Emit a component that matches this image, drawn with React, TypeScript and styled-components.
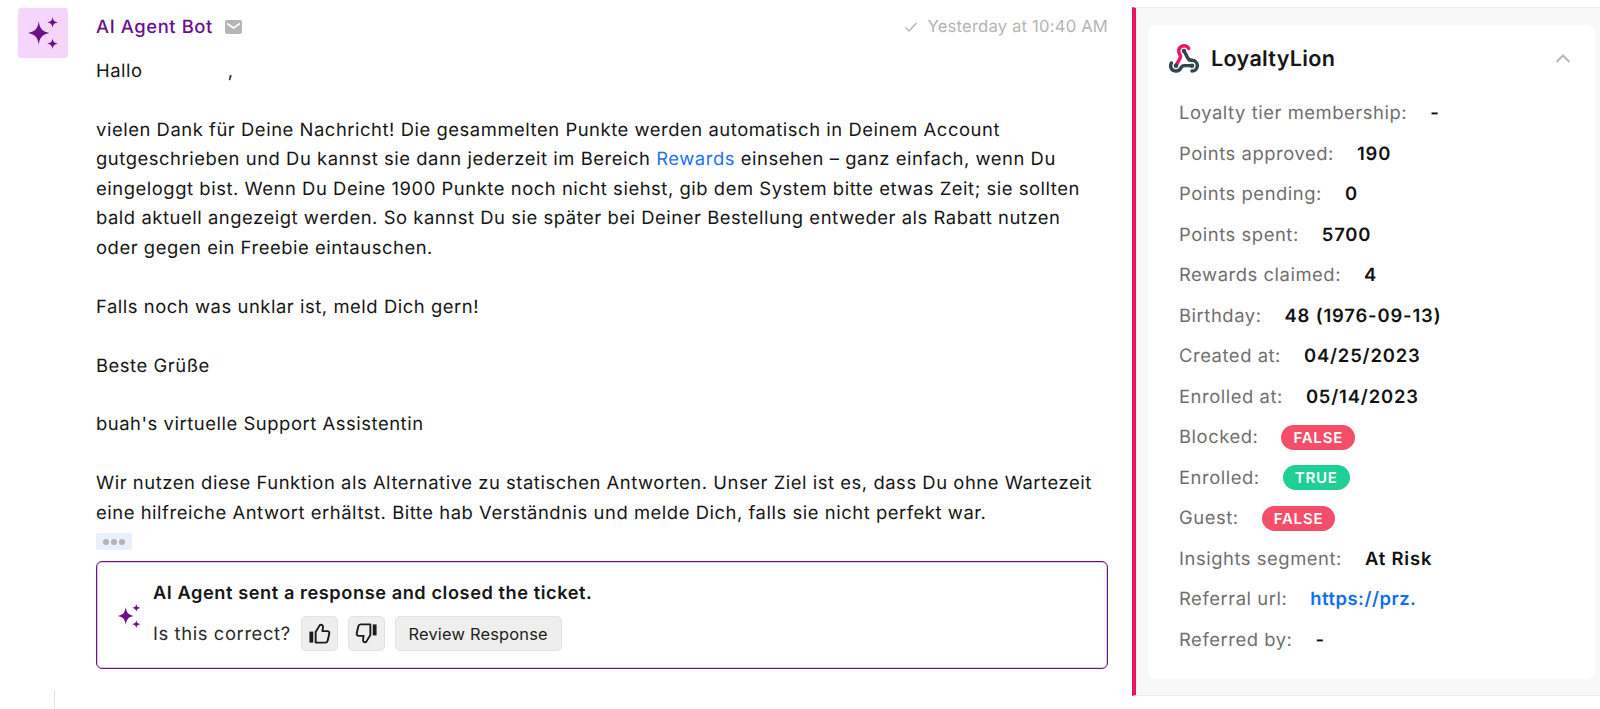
import styled, { createGlobalStyle } from 'styled-components';

const GlobalStyle = createGlobalStyle`
  html, body {
    margin: 0;
    padding: 0;
    background: #fff;
    font-family: 'Inter', sans-serif;
    text-rendering: geometricPrecision;
  }
`;

const Page = styled.div`
  display: flex;
  width: 1600px;
  height: 709px;
  overflow: hidden;
  color: #161616;
`;

const MessageColumn = styled.div`
  width: 1132px;
  flex: none;
  display: flex;
  flex-direction: column;
  padding: 8px 24px 0 18px;
  box-sizing: border-box;
`;

const Message = styled.div`
  display: flex;
  gap: 28px;
  flex: 1;
`;

const ThreadLine = styled.div`
  width: 1px;
  height: 18px;
  margin-left: 36px;
  margin-bottom: 1px;
  background: #e2e2e2;
`;

const Avatar = styled.div`
  width: 50px;
  height: 50px;
  flex: none;
  border-radius: 3px;
  background: #f6d5fd;
  display: flex;
  align-items: center;
  justify-content: center;
`;

const Content = styled.div`
  flex: 1;
  min-width: 0;
`;

const Header = styled.div`
  display: flex;
  align-items: center;
  height: 37px;
`;

const Sender = styled.span`
  font-size: 18.4px;
  letter-spacing: 0.6px;
  font-weight: 500;
  color: #6b0f8a;
`;

const MailIcon = styled.svg`
  margin-left: 12px;
  width: 17px;
  height: 14px;
`;

const Timestamp = styled.span`
  margin-left: auto;
  display: flex;
  align-items: center;
  gap: 10px;
  font-size: 16.6px;
  letter-spacing: 0.2px;
  color: #b4b4b4;
`;

const Body = styled.div`
  margin-top: 12px;
  font-size: 18.4px;
  letter-spacing: 0.55px;
  line-height: 29.45px;
`;

const Gap = styled.span`
  display: inline-block;
  width: ${(p: { $width: number }) => p.$width}px;
`;

const Link = styled.a`
  color: #1f73f1;
`;

const Dots = styled.div`
  margin-top: 5px;
  width: 36px;
  height: 17px;
  background: #e9f0fb;
  display: flex;
  align-items: center;
  justify-content: center;
  gap: 2px;
  border-radius: 1px;

  i {
    width: 6px;
    height: 6px;
    border-radius: 50%;
    background: #b2b2b2;
  }
`;

const Feedback = styled.div`
  margin-top: 11px;
  height: 108px;
  box-sizing: border-box;
  border: 1px solid #6b0f8a;
  box-shadow: inset 0 0 0 1px rgba(107, 15, 138, 0.22);
  border-radius: 6px;
  display: flex;
  align-items: center;
  gap: 11px;
  padding: 2px 0 0 19px;
`;

const FeedbackTitle = styled.div`
  font-size: 18.2px;
  letter-spacing: 0.57px;
  font-weight: 600;
  line-height: 24px;
`;

const FeedbackRow = styled.div`
  display: flex;
  align-items: center;
  gap: 10px;
  margin-top: 11px;
  font-size: 18.4px;
  letter-spacing: 0.6px;
  color: #2a2a2a;
`;

const GreyButton = styled.button`
  height: 35px;
  width: 167px;
  box-sizing: border-box;
  padding: 0;
  border: 1px solid #e2e2e2;
  border-radius: 5px;
  background: #eeeeee;
  color: #1c1c1c;
  font-family: 'Inter', sans-serif;
  font-size: 16.4px;
  letter-spacing: 0.2px;
  display: flex;
  align-items: center;
  justify-content: center;

  &.icon {
    width: 37px;
  }
`;

const Side = styled.div`
  flex: 1;
  height: 689px;
  margin-top: 7px;
  box-sizing: border-box;
  background: #f8f8f8;
  border-left: 4px solid #ee1463;
  border-top: 1px solid #ececec;
  border-bottom: 1px solid #ececec;
  padding: 17px 5px 16px 12px;
`;

const Card = styled.div`
  height: 100%;
  box-sizing: border-box;
  background: #fff;
  border-radius: 8px;
  padding: 0 0 0 20px;
`;

const CardHeader = styled.div`
  display: flex;
  align-items: center;
  height: 67px;
`;

const CardTitle = styled.div`
  margin-left: 11px;
  font-size: 21.6px;
  letter-spacing: 0.3px;
  font-weight: 600;
  color: #161616;
`;

const Chevron = styled.svg`
  margin-left: auto;
  margin-right: 23px;
  width: 18px;
  height: 18px;
`;

const Fields = styled.div`
  padding: 0 0 0 11px;
  margin-top: 1px;
`;

const Field = styled.div`
  display: flex;
  align-items: center;
  gap: 23px;
  height: 40.5px;
  font-size: 18.4px;
  letter-spacing: 0.55px;
`;

const Label = styled.span`
  color: #6f6f6f;
`;

const Value = styled.span`
  font-weight: 600;
  letter-spacing: 0.85px;
  color: #111;
`;

const UrlValue = styled(Value)`
  letter-spacing: 0.5px;
  color: #0f6fef;
`;

const Pill = styled.span<{ $ok?: boolean }>`
  height: 25px;
  padding: 0 12px;
  border-radius: 13px;
  background: ${p => (p.$ok ? '#1fd094' : '#f44e69')};
  color: #fff;
  font-size: 15px;
  font-weight: 600;
  letter-spacing: 0.8px;
  display: flex;
  align-items: center;
`;

const Sparkles = ({ size }: { size: number }) => (
  <svg width={size} height={size} viewBox="0 0 32 32" fill="#6b0f8a">
    <path d="M12 5 C13 12 15 14.5 22 16 C15 17.5 13 20 12 27 C11 20 9 17.5 2 16 C9 14.5 11 12 12 5Z" />
    <path d="M25 1 C25.6 4.5 26.5 5.4 30 6 C26.5 6.6 25.6 7.5 25 11 C24.4 7.5 23.5 6.6 20 6 C23.5 5.4 24.4 4.5 25 1Z" />
    <path d="M25 21 C25.6 24.5 26.5 25.4 30 26 C26.5 26.6 25.6 27.5 25 31 C24.4 27.5 23.5 26.6 20 26 C23.5 25.4 24.4 24.5 25 21Z" />
  </svg>
);

const ThumbIcon = styled.svg<{ $down?: boolean }>`
  transform: ${p => (p.$down ? 'rotate(180deg)' : 'none')};
`;

const Thumb = ({ down }: { down?: boolean }) => (
  <ThumbIcon $down={down} width="23" height="23" viewBox="0 0 24 24" fill="none" stroke="#1c1c1c" strokeWidth="2" strokeLinejoin="round">
    <rect x="1.5" y="10" width="4" height="11.5" fill="#1c1c1c" stroke="none" />
    <path d="M8 10.5 L12.5 3 C14.5 2.5 16 3.8 15.6 5.8 L15 9.5 H20 C21.5 9.5 22.6 10.8 22.2 12.3 L20.5 19.5 C20.2 20.8 19.2 21.5 18 21.5 H8 Z" />
  </ThumbIcon>
);

const LionLogo = () => (
  <svg width="32" height="32" viewBox="0 0 24 24" fill="none" strokeWidth="2.6" strokeLinecap="round" strokeLinejoin="round">
    <path stroke="#33454f" d="M18 16.98h-5.99c-1.1 0-1.95.94-2.48 1.9A4 4 0 0 1 2 17c.01-.7.2-1.4.57-2" />
    <path stroke="#33454f" d="m12 6 3.13 5.73C15.66 12.7 16.9 13 18 13a4 4 0 0 1 0 8" />
    <path stroke="#ee1463" d="m6 17 3.13-5.78c.53-.97.1-2.18-.5-3.1a4 4 0 1 1 6.89-4.06" />
    <circle cx="12" cy="6" r="1.7" fill="#33454f" stroke="none" />
    <circle cx="6" cy="17" r="1.7" fill="#33454f" stroke="none" />
    <circle cx="18" cy="17" r="1.7" fill="#33454f" stroke="none" />
  </svg>
);

const fields: { label: string; value: string; kind?: 'ok' | 'bad' | 'url' }[] = [
  { label: 'Loyalty tier membership:', value: '-' },
  { label: 'Points approved:', value: '190' },
  { label: 'Points pending:', value: '0' },
  { label: 'Points spent:', value: '5700' },
  { label: 'Rewards claimed:', value: '4' },
  { label: 'Birthday:', value: '48 (1976-09-13)' },
  { label: 'Created at:', value: '04/25/2023' },
  { label: 'Enrolled at:', value: '05/14/2023' },
  { label: 'Blocked:', value: 'FALSE', kind: 'bad' },
  { label: 'Enrolled:', value: 'TRUE', kind: 'ok' },
  { label: 'Guest:', value: 'FALSE', kind: 'bad' },
  { label: 'Insights segment:', value: 'At Risk' },
  { label: 'Referral url:', value: 'https://prz.', kind: 'url' },
  { label: 'Referred by:', value: '-' },
];

export default function App() {
  return (
    <Page>
      <GlobalStyle />
      <MessageColumn>
        <Message>
          <Avatar>
            <Sparkles size={34} />
          </Avatar>
          <Content>
            <Header>
              <Sender>AI Agent Bot</Sender>
              <MailIcon viewBox="0 0 17 14">
                <rect width="17" height="14" rx="2" fill="#b5b5b5" />
                <path d="M2 3.5 L8.5 8 L15 3.5" fill="none" stroke="#fff" strokeWidth="1.6" />
              </MailIcon>
              <Timestamp>
                <svg width="14" height="12" viewBox="0 0 14 12" fill="none" stroke="#b4b4b4" strokeWidth="1.3">
                  <path d="M1.5 6.5 L5 10 L12.5 2" />
                </svg>
                Yesterday at 10:40 AM
              </Timestamp>
            </Header>
            <Body>
              Hallo<Gap $width={85} />,<br />
              <br />
              vielen Dank für Deine Nachricht! Die gesammelten Punkte werden automatisch in Deinem Account gutgeschrieben und Du kannst sie dann jederzeit im Bereich <Link>Rewards</Link> einsehen – ganz einfach, wenn Du eingeloggt bist. Wenn Du Deine 1900 Punkte noch nicht siehst, gib dem System bitte etwas Zeit; sie sollten bald aktuell angezeigt werden. So kannst Du sie später bei Deiner Bestellung entweder als Rabatt nutzen<br />
              oder gegen ein Freebie eintauschen.<br />
              <br />
              Falls noch was unklar ist, meld Dich gern!<br />
              <br />
              Beste Grüße<br />
              <br />
              buah's virtuelle Support Assistentin<br />
              <br />
              Wir nutzen diese Funktion als Alternative zu statischen Antworten. Unser Ziel ist es, dass Du ohne Wartezeit<br />
              eine hilfreiche Antwort erhältst. Bitte hab Verständnis und melde Dich, falls sie nicht perfekt war.
            </Body>
            <Dots><i /><i /><i /></Dots>
            <Feedback>
              <Sparkles size={26} />
              <div>
                <FeedbackTitle>AI Agent sent a response and closed the ticket.</FeedbackTitle>
                <FeedbackRow>
                  Is this correct?
                  <GreyButton className="icon"><Thumb /></GreyButton>
                  <GreyButton className="icon"><Thumb down /></GreyButton>
                  <GreyButton>Review Response</GreyButton>
                </FeedbackRow>
              </div>
            </Feedback>
          </Content>
        </Message>
        <ThreadLine />
      </MessageColumn>
      <Side>
        <Card>
          <CardHeader>
            <LionLogo />
            <CardTitle>LoyaltyLion</CardTitle>
            <Chevron viewBox="0 0 18 18" fill="none" stroke="#b9b9b9" strokeWidth="2">
              <path d="M2.5 12 L9 5.5 L15.5 12" />
            </Chevron>
          </CardHeader>
          <Fields>
            {fields.map(f => (
              <Field key={f.label}>
                <Label>{f.label}</Label>
                {f.kind === 'ok' && <Pill $ok>{f.value}</Pill>}
                {f.kind === 'bad' && <Pill>{f.value}</Pill>}
                {f.kind === 'url' && <UrlValue>{f.value}</UrlValue>}
                {!f.kind && <Value>{f.value}</Value>}
              </Field>
            ))}
          </Fields>
        </Card>
      </Side>
    </Page>
  );
}
